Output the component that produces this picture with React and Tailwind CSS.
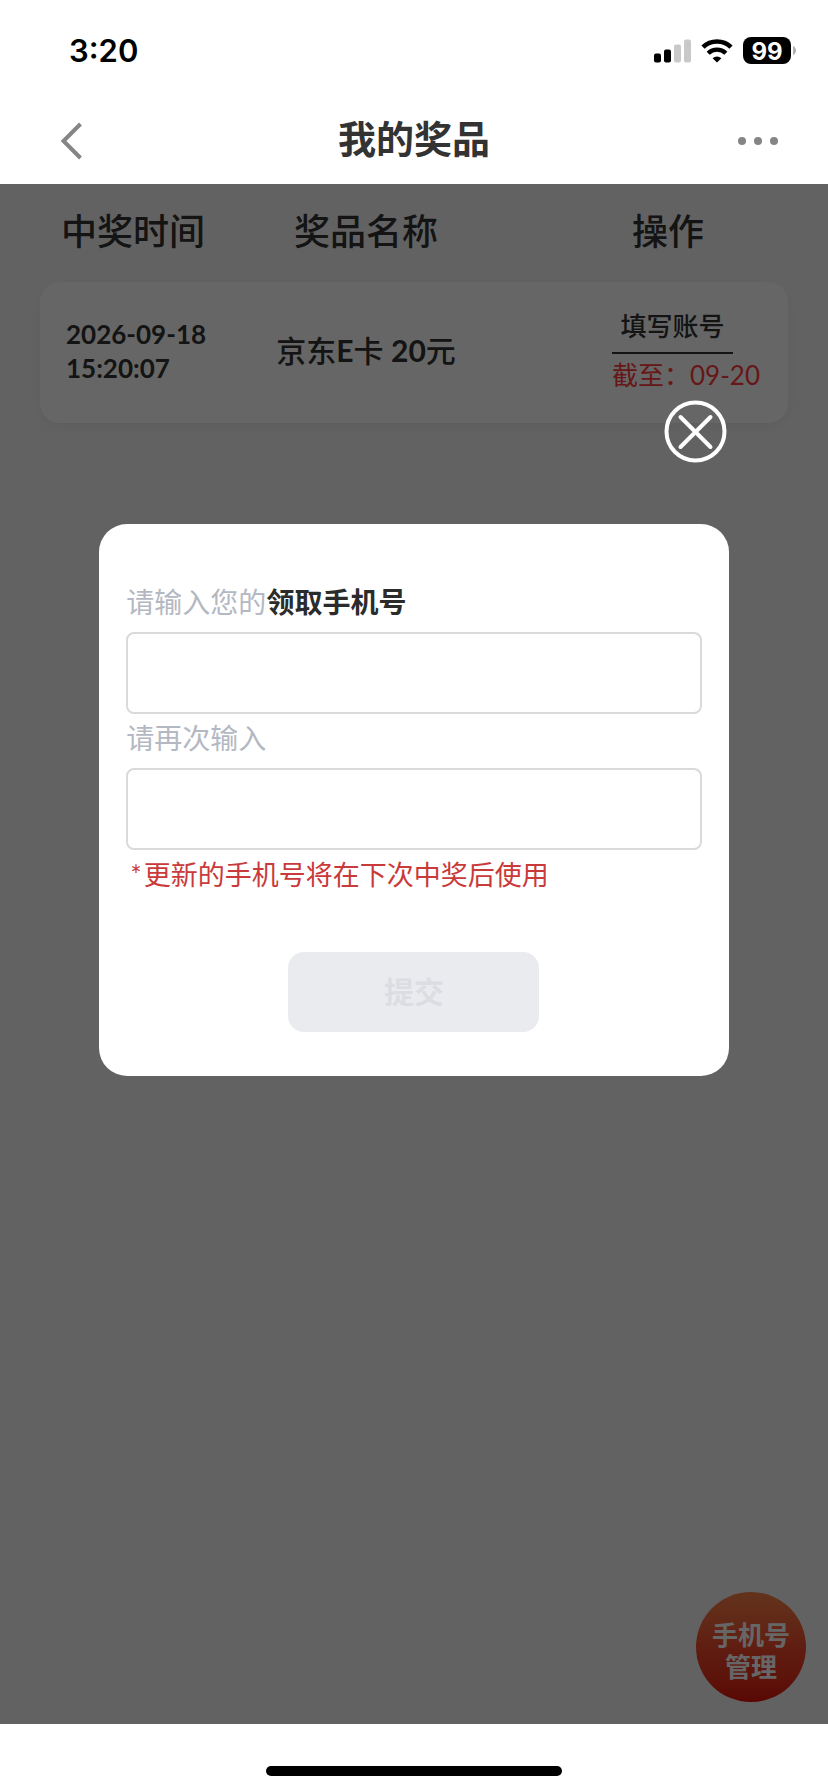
const prizes = [
  { date: "2026-09-18", time: "15:20:07", name: ["京东", "E", "卡 ", "20", "元"], deadline: "09-20" },
];

function StatusBar() {
  return (
    <div className="flex h-[98px] items-center justify-between pl-[69px] pr-8 pt-[3px] font-['Inter',sans-serif]">
      <span className="text-[31px] font-semibold leading-none text-black">3:20</span>
      <div className="flex items-center gap-2.5">
        <svg width="37" height="24" viewBox="0 0 37 24" aria-hidden="true">
          <rect x="0" y="14.5" width="7" height="9" rx="2" fill="#000" />
          <rect x="10" y="10.5" width="7" height="13" rx="2" fill="#000" />
          <rect x="20" y="5.5" width="7" height="18" rx="2" fill="#c9c9c9" />
          <rect x="30" y="0.5" width="7" height="23" rx="2" fill="#c9c9c9" />
        </svg>
        <svg width="32" height="24" viewBox="0 0 32 24" aria-hidden="true">
          <path d="M2 8.2a20 20 0 0 1 28 0" fill="none" stroke="#000" strokeWidth="4.6" />
          <path d="M7.2 14.2a12.6 12.6 0 0 1 17.6 0" fill="none" stroke="#000" strokeWidth="4.4" />
          <path d="M16 23.6l-4.4-4.4a6.4 6.4 0 0 1 8.8 0z" fill="#000" />
        </svg>
        <div className="flex items-center gap-0.5">
          <span className="flex h-[27px] w-12 items-center justify-center rounded-lg bg-black pt-0.5 text-[24px] font-bold leading-none text-white">
            99
          </span>
          <svg width="3" height="9" viewBox="0 0 3 9" aria-hidden="true">
            <path d="M0 0c2 1 3 2.500 3 4.500s-1 3.500-3 4.500z" fill="#b0b0b0" />
          </svg>
        </div>
      </div>
    </div>
  );
}

function NavBar() {
  return (
    <div className="flex h-[86px] items-center justify-between px-[46px]">
      <button type="button" aria-label="返回" className="w-14 pl-[13px]">
        <svg width="24" height="40" viewBox="0 0 24 40" fill="none" stroke="#858585" strokeWidth="4">
          <path d="M21.500 3L4.500 20l17 17" />
        </svg>
      </button>
      <h1 className="pb-1.5 text-[38px] font-bold leading-none text-[#333]">我的奖品</h1>
      <button type="button" aria-label="更多" className="flex w-14 justify-end">
        <svg width="48" height="10" viewBox="0 0 48 10" fill="#858585">
          <circle cx="8" cy="5" r="4" />
          <circle cx="24" cy="5" r="4" />
          <circle cx="40" cy="5" r="4" />
        </svg>
      </button>
    </div>
  );
}

function PrizeTable() {
  return (
    <table className="block px-10 text-[#333]">
      <thead className="block">
        <tr className="grid h-[98px] grid-cols-[186fr_280fr_282fr] items-center pb-1 text-[36px] leading-none">
          <th className="font-medium">中奖时间</th>
          <th className="font-medium">奖品名称</th>
          <th className="pl-[42px] font-medium">操作</th>
        </tr>
      </thead>
      <tbody className="block">
        {prizes.map((prize) => (
          <tr
            key={prize.time}
            className="grid h-[141px] grid-cols-[186fr_280fr_282fr] items-center rounded-[20px] bg-white pb-1 shadow-[0_4px_14px_rgba(0,0,0,0.06)]"
          >
            <td className="pl-[26px] text-[26px] font-bold leading-[34px]">
              {prize.date}
              <br />
              {prize.time}
            </td>
            <td className="text-center text-[30px] font-medium">
              {prize.name.map((part) =>
                /^[A-Z0-9]+$/.test(part) ? <b key={part} className="font-bold">{part}</b> : part
              )}
            </td>
            <td className="pb-1 pl-[106px] text-[26px]">
              <button type="button" className="block h-[52px] w-[121px] border-b-2 border-[#333] font-medium">
                填写账号
              </button>
              <p className="whitespace-nowrap leading-[42px] text-[#ff3a3a]">截至：{prize.deadline}</p>
            </td>
          </tr>
        ))}
      </tbody>
    </table>
  );
}

function PhoneDialog() {
  return (
    <div className="absolute inset-0 flex flex-col items-center bg-black/60 pt-[216px]">
      <div className="flex w-[76%] flex-col">
        <button type="button" aria-label="关闭" className="mr-0.5 self-end">
          <svg width="63" height="63" viewBox="0 0 63 63" fill="none" stroke="#fff" strokeWidth="4" strokeLinecap="round">
            <circle cx="31.500" cy="31.500" r="29" />
            <path d="M16.500 17l30 30M46.500 17l-30 30" />
          </svg>
        </button>
        <form
          role="dialog"
          aria-label="领取手机号"
          className="mt-[61px] flex flex-col rounded-[28px] bg-white px-[27px] pb-11 pt-[54px]"
        >
          <label htmlFor="phone" className="h-[54px] text-[28px] leading-[48px] text-[#b4b8c2]">
            请输入您的<b className="font-bold text-[#2b2b2b]">领取手机号</b>
          </label>
          <input id="phone" type="tel" className="h-[82px] rounded-lg border-2 border-[#d9dadc] px-4 text-[28px]" />
          <label htmlFor="phone-again" className="h-[54px] text-[28px] leading-[48px] text-[#b4b8c2]">
            请再次输入
          </label>
          <input id="phone-again" type="tel" className="h-[82px] rounded-lg border-2 border-[#d9dadc] px-4 text-[28px]" />
          <p className="flex gap-0.5 pl-1 text-[27px] leading-[50px] text-[#c93a3a]">
            <span>*</span>
            <span>更新的手机号将在下次中奖后使用</span>
          </p>
          <button
            type="submit"
            disabled
            className="mt-[52px] h-20 w-[251px] self-center rounded-2xl bg-[#eaebef] pb-0.5 text-[30px] font-bold text-[#dcdde2]"
          >
            提交
          </button>
        </form>
      </div>
    </div>
  );
}

export default function App() {
  return (
    <div className="flex min-h-screen flex-col bg-white font-['Lato','Noto_Sans_CJK_SC',sans-serif]">
      <header>
        <StatusBar />
        <NavBar />
      </header>
      <main className="relative flex-1 bg-[#f6f6f6]">
        <PrizeTable />
        <button
          type="button"
          className="absolute bottom-[22px] right-[22px] size-[110px] rounded-full bg-linear-to-b from-[#f58048] via-[#f04a2c] to-[#e01208] pt-2 text-[26px] font-bold leading-8 text-white"
        >
          手机号
          <br />
          管理
        </button>
        <PhoneDialog />
      </main>
      <footer className="flex h-[68px] justify-center pt-[42px]">
        <span className="h-2.5 w-[296px] rounded-full bg-black" />
      </footer>
    </div>
  );
}
